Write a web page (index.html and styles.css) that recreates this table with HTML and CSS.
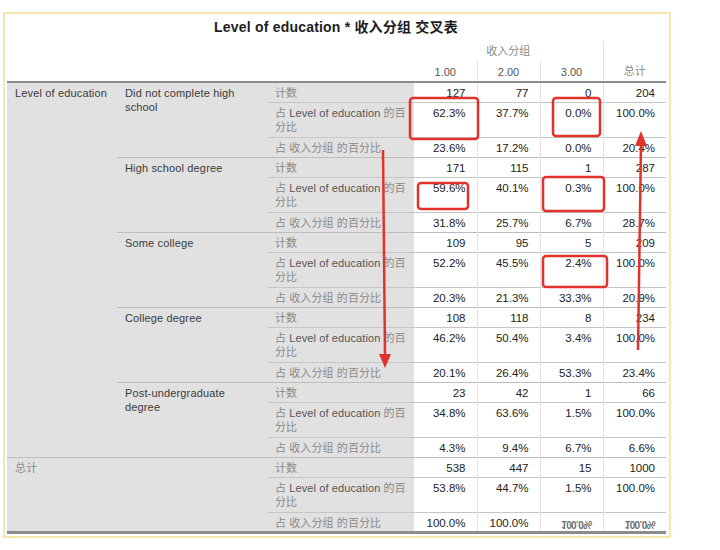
FILE: index.html
```html
<!DOCTYPE html>
<html lang="zh">
<head>
<meta charset="utf-8">
<title>Level of education * 收入分组 交叉表</title>
<link rel="stylesheet" href="styles.css">
</head>
<body>
<div class="page">
  <div class="frame">
    <div class="title">Level of education * 收入分组 交叉表</div>
    <table class="xtab">
      <colgroup>
        <col class="c-a"><col class="c-b"><col class="c-c">
        <col class="c-d"><col class="c-d"><col class="c-d"><col class="c-d">
      </colgroup>
      <thead>
        <tr class="h1">
          <td colspan="3"></td>
          <th colspan="3" class="cjk">收入分组</th>
          <th rowspan="2" class="cjk tot vl">总计</th>
        </tr>
        <tr class="h2">
          <td colspan="3"></td>
          <th>1.00</th><th class="vl">2.00</th><th class="vl">3.00</th>
        </tr>
      </thead>
      <tbody>
        <tr class="cnt">
          <td rowspan="15" class="lab lab-a">Level of education</td>
          <td rowspan="3" class="lab">Did not complete high school</td>
          <td class="stat"><span class="cjk">计数</span></td>
          <td class="num">127</td><td class="num vl">77</td><td class="num vl">0</td><td class="num vl">204</td>
        </tr>
        <tr class="pct sep">
          <td class="stat"><span class="cjk">占</span> Level of education <span class="cjk">的百</span><span class="cjk">分比</span></td>
          <td class="num">62.3%</td><td class="num vl">37.7%</td><td class="num vl">0.0%</td><td class="num vl">100.0%</td>
        </tr>
        <tr class="cp sep">
          <td class="stat"><span class="cjk">占 收入分组 的百分比</span></td>
          <td class="num">23.6%</td><td class="num vl">17.2%</td><td class="num vl">0.0%</td><td class="num vl">20.4%</td>
        </tr>

        <tr class="cnt grp">
          <td rowspan="3" class="lab">High school degree</td>
          <td class="stat"><span class="cjk">计数</span></td>
          <td class="num">171</td><td class="num vl">115</td><td class="num vl">1</td><td class="num vl">287</td>
        </tr>
        <tr class="pct sep">
          <td class="stat"><span class="cjk">占</span> Level of education <span class="cjk">的百</span><span class="cjk">分比</span></td>
          <td class="num">59.6%</td><td class="num vl">40.1%</td><td class="num vl">0.3%</td><td class="num vl">100.0%</td>
        </tr>
        <tr class="cp sep">
          <td class="stat"><span class="cjk">占 收入分组 的百分比</span></td>
          <td class="num">31.8%</td><td class="num vl">25.7%</td><td class="num vl">6.7%</td><td class="num vl">28.7%</td>
        </tr>

        <tr class="cnt grp">
          <td rowspan="3" class="lab">Some college</td>
          <td class="stat"><span class="cjk">计数</span></td>
          <td class="num">109</td><td class="num vl">95</td><td class="num vl">5</td><td class="num vl">209</td>
        </tr>
        <tr class="pct sep">
          <td class="stat"><span class="cjk">占</span> Level of education <span class="cjk">的百</span><span class="cjk">分比</span></td>
          <td class="num">52.2%</td><td class="num vl">45.5%</td><td class="num vl">2.4%</td><td class="num vl">100.0%</td>
        </tr>
        <tr class="cp sep">
          <td class="stat"><span class="cjk">占 收入分组 的百分比</span></td>
          <td class="num">20.3%</td><td class="num vl">21.3%</td><td class="num vl">33.3%</td><td class="num vl">20.9%</td>
        </tr>

        <tr class="cnt grp">
          <td rowspan="3" class="lab">College degree</td>
          <td class="stat"><span class="cjk">计数</span></td>
          <td class="num">108</td><td class="num vl">118</td><td class="num vl">8</td><td class="num vl">234</td>
        </tr>
        <tr class="pct sep">
          <td class="stat"><span class="cjk">占</span> Level of education <span class="cjk">的百</span><span class="cjk">分比</span></td>
          <td class="num">46.2%</td><td class="num vl">50.4%</td><td class="num vl">3.4%</td><td class="num vl">100.0%</td>
        </tr>
        <tr class="cp sep">
          <td class="stat"><span class="cjk">占 收入分组 的百分比</span></td>
          <td class="num">20.1%</td><td class="num vl">26.4%</td><td class="num vl">53.3%</td><td class="num vl">23.4%</td>
        </tr>

        <tr class="cnt grp">
          <td rowspan="3" class="lab">Post-undergraduate degree</td>
          <td class="stat"><span class="cjk">计数</span></td>
          <td class="num">23</td><td class="num vl">42</td><td class="num vl">1</td><td class="num vl">66</td>
        </tr>
        <tr class="pct sep">
          <td class="stat"><span class="cjk">占</span> Level of education <span class="cjk">的百</span><span class="cjk">分比</span></td>
          <td class="num">34.8%</td><td class="num vl">63.6%</td><td class="num vl">1.5%</td><td class="num vl">100.0%</td>
        </tr>
        <tr class="cp sep">
          <td class="stat"><span class="cjk">占 收入分组 的百分比</span></td>
          <td class="num">4.3%</td><td class="num vl">9.4%</td><td class="num vl">6.7%</td><td class="num vl">6.6%</td>
        </tr>

        <tr class="cnt major">
          <td colspan="2" class="lab"><span class="cjk">总计</span></td>
          <td class="stat"><span class="cjk">计数</span></td>
          <td class="num">538</td><td class="num vl">447</td><td class="num vl">15</td><td class="num vl">1000</td>
        </tr>
        <tr class="pct sep">
          <td colspan="2" class="lab"></td>
          <td class="stat"><span class="cjk">占</span> Level of education <span class="cjk">的百</span><span class="cjk">分比</span></td>
          <td class="num">53.8%</td><td class="num vl">44.7%</td><td class="num vl">1.5%</td><td class="num vl">100.0%</td>
        </tr>
        <tr class="cp sep last">
          <td colspan="2" class="lab"></td>
          <td class="stat"><span class="cjk">占 收入分组 的百分比</span></td>
          <td class="num">100.0%</td><td class="num vl">100.0%</td><td class="num vl"><span class="smudge">100.0%</span></td><td class="num vl"><span class="smudge">100.0%</span></td>
        </tr>
      </tbody>
    </table>
  </div>

  <svg class="marks" width="720" height="550" viewBox="0 0 720 550" aria-hidden="true">
    <g fill="none" stroke="#e2322b" stroke-width="2.5">
      <rect x="410" y="98" width="68" height="41" rx="3"/>
      <rect x="553" y="98" width="47" height="38" rx="3"/>
      <rect x="418" y="183" width="50" height="26" rx="3"/>
      <rect x="543" y="177" width="61" height="34" rx="3"/>
      <rect x="543" y="256" width="64" height="31" rx="3"/>
    </g>
    <g stroke="#e2322b" stroke-width="2.5" fill="#e2322b">
      <line x1="383" y1="150" x2="385" y2="356"/>
      <polygon points="379,354 391,354 385,368" stroke="none"/>
      <line x1="638" y1="350" x2="641" y2="144"/>
      <polygon points="635,146 647,146 641,131" stroke="none"/>
    </g>
  </svg>
</div>
</body>
</html>
```

FILE: styles.css
```css
html, body {
  margin: 0;
  padding: 0;
  background: #ffffff;
}

.page {
  position: relative;
  width: 720px;
  height: 550px;
  overflow: hidden;
  font-family: "Liberation Sans", "Noto Sans CJK SC", sans-serif;
  font-size: 11px;
  color: #333;
}

.frame {
  margin: 12px 0 0 3px;
  width: 668px;
  box-sizing: border-box;
  border: 2px solid #f6e7ac;
  padding: 0 4px 2px 2px;
  background: #fff;
}

.title {
  height: 27px;
  line-height: 27px;
  text-align: center;
  font-size: 14px;
  font-weight: bold;
  color: #1e1e1e;
  letter-spacing: 0.2px;
}

.xtab {
  border-collapse: collapse;
  table-layout: fixed;
  width: 658px;
}

.c-a { width: 110px; }
.c-b { width: 150px; }
.c-c { width: 147px; }
.c-d { width: 63px; }

.xtab td, .xtab th {
  padding: 0;
  font-weight: normal;
  line-height: 14px;
  vertical-align: top;
}

.cjk { color: #8a8a8a; }

/* header */
.h1 th, .h1 td {
  height: 20px;
  box-sizing: border-box;
  vertical-align: middle;
  text-align: center;
  color: #555;
}
.h2 th, .h2 td {
  height: 21px;
  box-sizing: border-box;
  vertical-align: middle;
  text-align: center;
  color: #555;
}
.h2 th { padding-top: 1px; }
.h1 th.cjk { color: #8a8a8a; }
.tot { vertical-align: bottom !important; padding-bottom: 3px !important; }
.h2 th, .h2 td { border-bottom: 2px solid #8c8c8c; }
.xtab .h1 th.tot { border-bottom: 2px solid #8c8c8c; }
th.vl, td.vl { border-left: 1px solid #e2e2e2; }

/* body */
.lab {
  background: #e1e1e1;
  padding: 3px 16px 0 8px !important;
  color: #3a3a3a;
  letter-spacing: 0.15px;
}
.lab-a { padding-right: 2px !important; }
.stat {
  background: #e1e1e1;
  padding: 3px 5px 0 8px !important;
  color: #555;
  letter-spacing: 0.1px;
}
.num {
  text-align: right;
  padding: 3px 11px 0 0 !important;
  color: #222;
  font-size: 11.5px;
}

.cnt td { height: 20px; box-sizing: border-box; }
.pct td { height: 35px; box-sizing: border-box; }
.cp td { height: 20px; box-sizing: border-box; }

.sep .stat, .sep .num { border-top: 1px solid #c6c6c6; }
.grp td { border-top: 1px solid #bdbdbd; }
.major td { border-top: 1px solid #bdbdbd; }
.last td { border-bottom: 3px solid #8c8c8c; }

.smudge {
  display: inline-block;
  transform: scaleY(-1);
  color: #6d6d6d;
  letter-spacing: -0.6px;
  font-weight: bold;
  font-size: 10px;
}

.marks {
  position: absolute;
  left: 0;
  top: 0;
  pointer-events: none;
}
```
